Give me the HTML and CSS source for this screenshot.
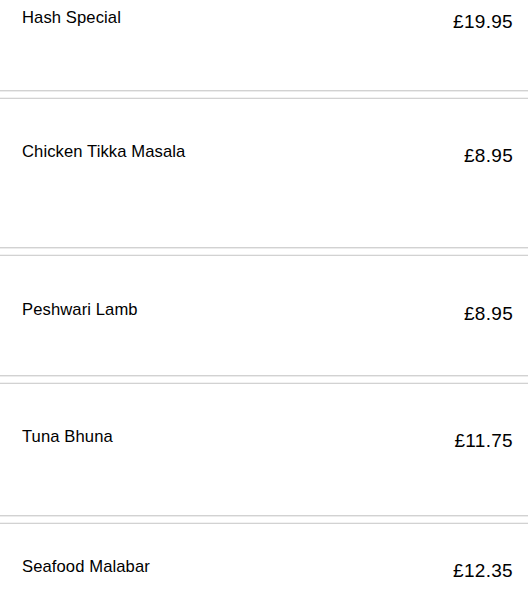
FILE: index.html
```html
<!DOCTYPE html>
<html lang="en">
<head>
<meta charset="utf-8">
<title>Menu</title>
<link rel="stylesheet" href="styles.css">
</head>
<body>
<ul class="menu">
  <li class="item item--first">
    <span class="item__name">Hash Special</span>
    <span class="item__price">£19.95</span>
  </li>
  <li class="item item--tall">
    <span class="item__name">Chicken Tikka Masala</span>
    <span class="item__price">£8.95</span>
  </li>
  <li class="item item--short">
    <span class="item__name">Peshwari Lamb</span>
    <span class="item__price">£8.95</span>
  </li>
  <li class="item item--mid">
    <span class="item__name">Tuna Bhuna</span>
    <span class="item__price">£11.75</span>
  </li>
  <li class="item item--last">
    <span class="item__name">Seafood Malabar</span>
    <span class="item__price">£12.35</span>
  </li>
</ul>
</body>
</html>
```
FILE: styles.css
```css
* { box-sizing: border-box; }
html, body {
  margin: 0;
  padding: 0;
  background: #ffffff;
}
body {
  font-family: "Liberation Sans", Arial, sans-serif;
  color: #000000;
  overflow: hidden;
}
.menu {
  list-style: none;
  margin: 0;
  padding: 0;
  display: flex;
  flex-direction: column;
  gap: 7px;
}
.item {
  display: flex;
  justify-content: space-between;
  align-items: flex-start;
  padding: 44px 15px 0 22px;
  border-top: 1px solid #d2d2d2;
  border-bottom: 1px solid #d2d2d2;
  box-shadow: 0 1px 0 #ececec, 0 -1px 0 #f2f2f2;
  background: #ffffff;
}
.item__name {
  font-size: 16.6px;
  line-height: 18px;
  letter-spacing: 0.1px;
}
.item__price {
  font-size: 19px;
  line-height: 26px;
  letter-spacing: 0.3px;
}
.item--first {
  border-top: none;
  height: 91px;
  padding-top: 9px;
}
.item--tall { height: 150px; }
.item--short { height: 121px; padding-top: 45px; }
.item--mid { height: 133px; }
.item--last { height: 120px; padding-top: 34px; }
```
